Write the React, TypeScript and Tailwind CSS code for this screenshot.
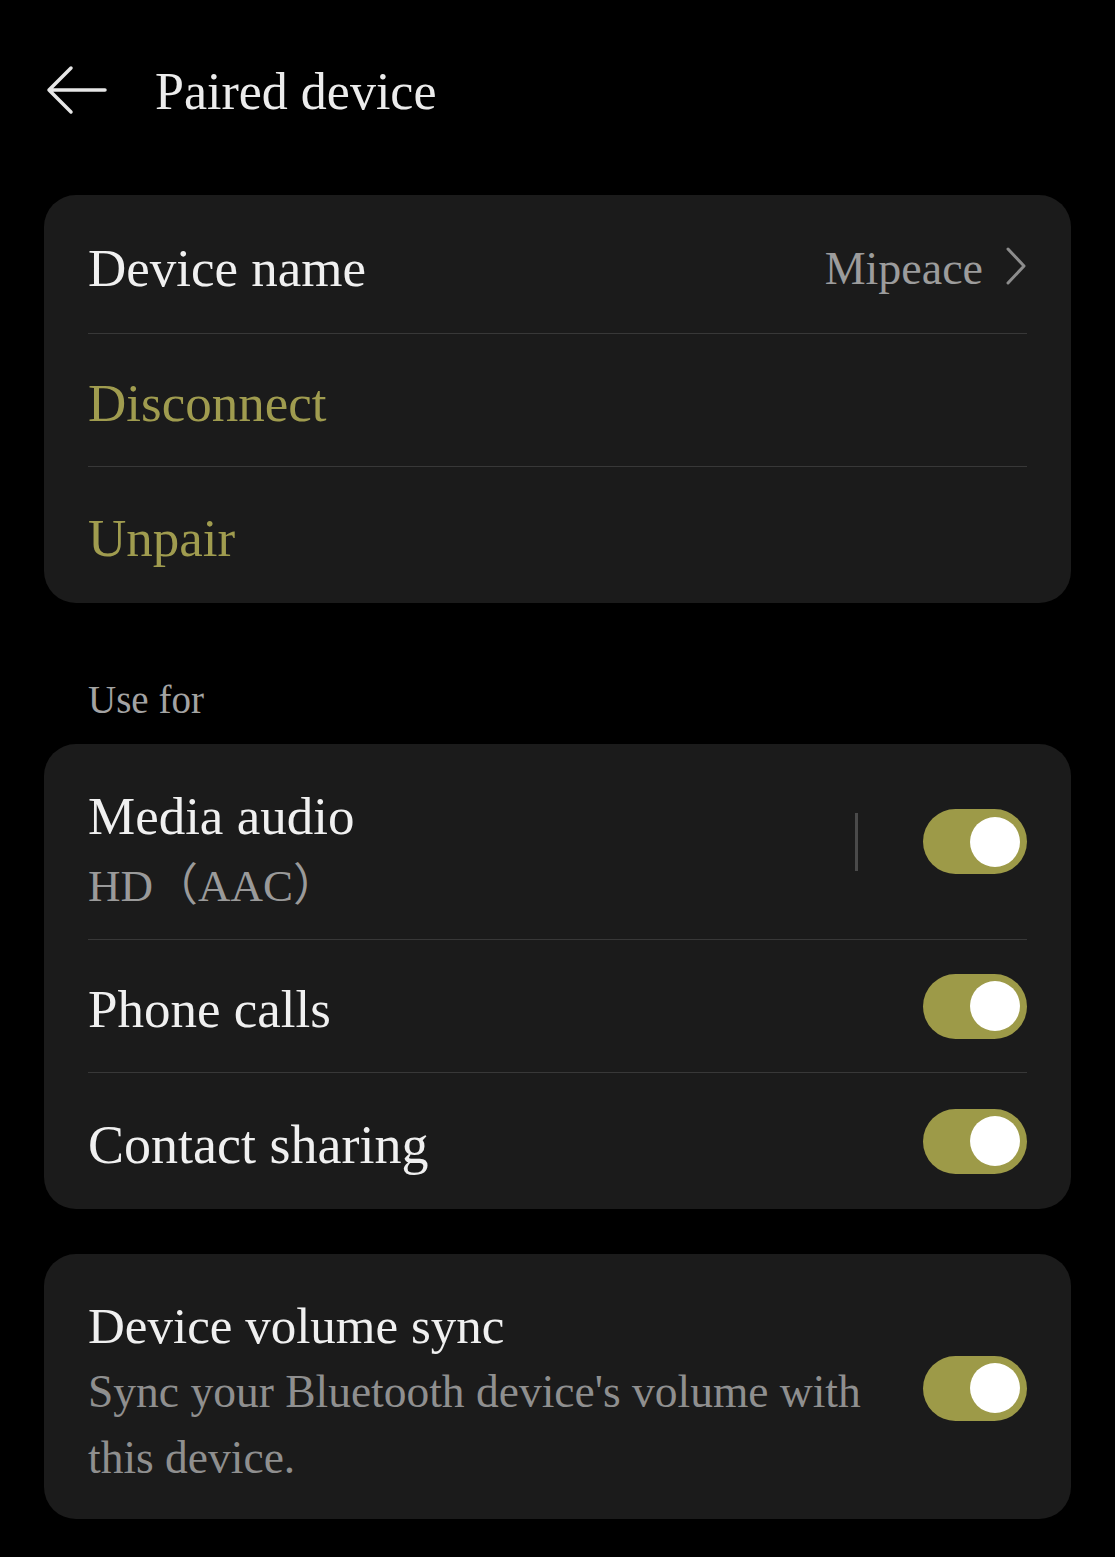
const serif = { fontFamily: '"Liberation Serif", "Noto Sans CJK SC", serif' };

function Toggle() {
  return (
    <div className="relative h-[65px] w-[104px] shrink-0 rounded-full bg-[#9d9a48]">
      <div className="absolute right-[7px] top-[7.5px] h-[50px] w-[50px] rounded-full bg-white" />
    </div>
  );
}

function Divider() {
  return <div className="h-px bg-[#383838]" />;
}

export default function App() {
  return (
    <div className="min-h-[1557px] w-[1115px] bg-black px-[44px] pb-[38px]" style={serif}>
      {/* Header */}
      <div className="flex h-[180px] items-center">
        <svg width="62" height="50" viewBox="0 0 62 50" className="ml-[1px]">
          <path
            d="M4 25 H60 M26 3 L4 25 L26 47"
            stroke="#e6e6e6"
            strokeWidth="3.5"
            fill="none"
            strokeLinecap="round"
            strokeLinejoin="round"
          />
        </svg>
        <h1 className="ml-[48px] mt-[4px] text-[52px] leading-none text-[#ececec]">Paired device</h1>
      </div>

      {/* Card 1 */}
      <div className="mt-[15px] rounded-[32px] bg-[#1b1b1b] px-[44px]">
        <div className="flex h-[138px] items-center justify-between">
          <span className="mt-[10px] text-[53px] text-[#f0f0f0]">Device name</span>
          <div className="mt-[8px] flex items-center gap-[22px]">
            <span className="text-[46px] text-[#9c9c9c]">Mipeace</span>
            <svg width="22" height="38" viewBox="0 0 22 38" className="-mt-[4px]">
              <path
                d="M3 2 L19 19 L3 36"
                stroke="#8c8c8c"
                strokeWidth="3"
                fill="none"
                strokeLinecap="round"
                strokeLinejoin="round"
              />
            </svg>
          </div>
        </div>
        <Divider />
        <div className="flex h-[132px] items-center">
          <span className="mt-[8px] text-[53px] text-[#a09c4f]">Disconnect</span>
        </div>
        <Divider />
        <div className="flex h-[136px] items-center">
          <span className="mt-[8px] text-[53px] text-[#a09c4f]">Unpair</span>
        </div>
      </div>

      {/* Section label */}
      <div className="h-[141px] pl-[44px] pt-[78px]">
        <p className="text-[39px] leading-[38px] text-[#a3a3a3]">Use for</p>
      </div>

      {/* Card 2 */}
      <div className="rounded-[32px] bg-[#1b1b1b] px-[44px]">
        <div className="flex h-[195px] items-center">
          <div className="flex-1 pt-[19px]">
            <p className="text-[53px] leading-[70px] text-[#f0f0f0]">Media audio</p>
            <p className="text-[45px] leading-[70px] text-[#9a9a9a]">HD（AAC）</p>
          </div>
          <div className="mr-[65px] h-[58px] w-[3px] bg-[#4a4a4a]" />
          <Toggle />
        </div>
        <Divider />
        <div className="flex h-[132px] items-center justify-between">
          <span className="mt-[8px] text-[53px] text-[#f0f0f0]">Phone calls</span>
          <Toggle />
        </div>
        <Divider />
        <div className="flex h-[136px] items-center justify-between">
          <span className="mt-[8px] text-[54px] text-[#f0f0f0]">Contact sharing</span>
          <Toggle />
        </div>
      </div>

      {/* Card 3 */}
      <div className="mt-[45px] flex items-center rounded-[32px] bg-[#1b1b1b] px-[44px] pb-[28px] pt-[39px]">
        <div className="mr-[40px] flex-1">
          <p className="text-[51px] leading-[66px] text-[#f0f0f0]">Device volume sync</p>
          <p className="text-[45.5px] leading-[66px] text-[#8f8f8f]">
            Sync your Bluetooth device's volume with this device.
          </p>
        </div>
        <div className="-mt-[8px]">
          <Toggle />
        </div>
      </div>
    </div>
  );
}
